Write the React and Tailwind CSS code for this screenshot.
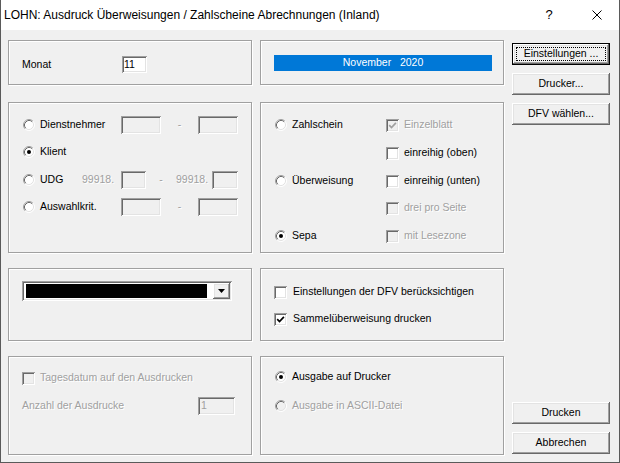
import React from 'react';

const sunken = 'shadow-[inset_1px_1px_0_#a0a0a0,inset_-1px_-1px_0_#fff,inset_2px_2px_0_#696969,inset_-2px_-2px_0_#e3e3e3]';
const raised = 'shadow-[inset_-1px_-1px_0_#696969,inset_1px_1px_0_#fff,inset_-2px_-2px_0_#a0a0a0,inset_2px_2px_0_#e3e3e3]';
const panel = 'border border-[#a0a0a0] shadow-[1px_1px_0_#fff,inset_1px_1px_0_#fff]';
const grayText = 'text-[#a0a0a0] [text-shadow:1px_1px_0_#fff]';

const Radio = ({ checked, disabled }) => (
  <svg width="12" height="12" viewBox="0 0 12 12" className="shrink-0">
    <circle cx="6" cy="6" r="5" fill={disabled ? '#f0f0f0' : '#fff'} />
    <path d="M2.11 9.89A5.5 5.5 0 0 1 9.89 2.11" stroke="#a0a0a0" fill="none" />
    <path d="M9.89 2.11A5.5 5.5 0 0 1 2.11 9.89" stroke="#fff" fill="none" />
    <path d="M2.82 9.18A4.5 4.5 0 0 1 9.18 2.82" stroke="#696969" fill="none" />
    <path d="M9.18 2.82A4.5 4.5 0 0 1 2.82 9.18" stroke="#e3e3e3" fill="none" />
    {checked && <circle cx="6" cy="6" r="2" fill={disabled ? '#a0a0a0' : '#000'} />}
  </svg>
);

const Check = ({ checked, disabled }) => (
  <div className={`w-[13px] h-[13px] shrink-0 flex items-center justify-center ${sunken} ${disabled ? 'bg-[#f0f0f0]' : 'bg-white'}`}>
    {checked && (
      <svg width="13" height="13" viewBox="0 0 13 13">
        <path d="M3.2 6.2l2.3 2.3 4.4-4.6" stroke={disabled ? '#a0a0a0' : '#000'} strokeWidth="1.7" fill="none" />
      </svg>
    )}
  </div>
);

const Field = ({ w, value, white, gray }) => (
  <div className={`h-[18px] ${w} ${sunken} ${white ? 'bg-white' : 'bg-[#f0f0f0]'} flex items-center pl-[3px] ${gray ? 'text-[#a0a0a0]' : ''}`}>
    {value}
  </div>
);

const Button = ({ children, isDefault }) => (
  <div className={`relative h-[22px] flex items-center justify-center bg-[#f0f0f0] ${isDefault ? 'border border-black' : ''} ${raised}`}>
    {isDefault && <div className="absolute inset-[3px] border border-dotted border-black" />}
    <span className="relative">{children}</span>
  </div>
);

const App = () => {
  return (
    <div className="w-[620px] h-[463px] flex flex-col bg-[#f0f0f0] border-x border-b border-[#5a5a5a] font-['Liberation_Sans',Arial,sans-serif] text-[10.5px] text-black overflow-hidden">
      {/* Title bar */}
      <div className="h-[30px] bg-white flex items-center pl-[3px] text-[12px] shrink-0">
        <span>LOHN: Ausdruck Überweisungen / Zahlscheine Abrechnungen (Inland)</span>
        <span className="ml-auto w-[12px] text-center text-[13px]">?</span>
        <svg width="10" height="10" viewBox="0 0 10 10" className="ml-[37px] mr-[17px]">
          <path d="M0.5 0.5l9 9M9.5 0.5l-9 9" stroke="#000" strokeWidth="1" />
        </svg>
      </div>

      <div className="flex pt-[10px] pl-[7px]">
        <div className="grid grid-cols-[244px_244px] grid-rows-[47px_151px_73px_99px] gap-x-[8px] gap-y-[15px]">
          {/* Monat */}
          <div className={`${panel} h-[45px] pt-[15px] pl-[13px]`}>
            <div className="flex items-center h-[17px]">
              <span className="w-[100px]">Monat</span>
              <div className={`h-[17px] w-[25px] ${sunken} bg-white flex items-center pl-[2px]`}>11</div>
            </div>
          </div>
          <div className={`${panel} h-[45px] pt-[14px] pl-[13px]`}>
            <div className="w-[218px] h-[16px] bg-[#0078d7] text-white flex items-center justify-center whitespace-pre">
              November   2020
            </div>
          </div>

          {/* Selection */}
          <div className={`${panel} pt-[13px] pl-[14px]`}>
            <div className="flex items-center h-[18px]">
              <Radio />
              <span className="ml-[5px] w-[81px]">Dienstnehmer</span>
              <Field w="w-[40px]" />
              <span className={`w-[37px] text-center ${grayText}`}>-</span>
              <Field w="w-[40px]" />
            </div>
            <div className="flex items-center h-[18px] mt-[9px]">
              <Radio checked />
              <span className="ml-[5px]">Klient</span>
            </div>
            <div className="flex items-center h-[18px] mt-[10px]">
              <Radio />
              <span className="ml-[5px] w-[42px]">UDG</span>
              <span className={`w-[39px] ${grayText}`}>99918.</span>
              <Field w="w-[25px]" />
              <span className={`w-[30px] text-center ${grayText}`}>-</span>
              <span className={`w-[36px] ${grayText}`}>99918.</span>
              <Field w="w-[26px]" />
            </div>
            <div className="flex items-center h-[18px] mt-[9px]">
              <Radio />
              <span className="ml-[5px] w-[81px]">Auswahlkrit.</span>
              <Field w="w-[40px]" />
              <span className={`w-[37px] text-center ${grayText}`}>-</span>
              <Field w="w-[40px]" />
            </div>
          </div>

          {/* Formular */}
          <div className={`${panel} pt-[13px] pl-[14px]`}>
            {[
              { radio: 'Zahlschein', check: 'Einzelblatt', checked: true, disabled: true },
              { check: 'einreihig (oben)' },
              { radio: 'Überweisung', check: 'einreihig (unten)' },
              { check: 'drei pro Seite', disabled: true },
              { radio: 'Sepa', radioChecked: true, check: 'mit Lesezone', disabled: true },
            ].map((row, idx) => (
              <div key={idx} className={`flex items-center h-[18px] ${idx === 0 ? '' : idx === 3 ? 'mt-[9px]' : 'mt-[10px]'}`}>
                <div className="w-[111px] flex items-center">
                  {row.radio && (
                    <>
                      <Radio checked={row.radioChecked} />
                      <span className="ml-[5px]">{row.radio}</span>
                    </>
                  )}
                </div>
                <Check checked={row.checked} disabled={row.disabled} />
                <span className={`ml-[5px] ${row.disabled ? grayText : ''}`}>{row.check}</span>
              </div>
            ))}
          </div>

          {/* Combobox */}
          <div className={`${panel} pt-[12px] pl-[13px]`}>
            <div className={`w-[210px] h-[20px] p-[2px] flex bg-white ${sunken}`}>
              <div className="ml-[2px] my-[1px] w-[181px] bg-black" />
              <div className={`ml-[6px] w-[17px] flex items-center justify-center bg-[#f0f0f0] ${raised}`}>
                <svg width="7" height="4" viewBox="0 0 7 4">
                  <polygon points="0,0 7,0 3.5,4" fill="#000" />
                </svg>
              </div>
            </div>
          </div>
          <div className={`${panel} pt-[14px] pl-[13px]`}>
            <div className="flex items-center h-[18px]">
              <Check />
              <span className="ml-[6px]">Einstellungen der DFV berücksichtigen</span>
            </div>
            <div className="flex items-center h-[18px] mt-[9px]">
              <Check checked />
              <span className="ml-[6px]">Sammelüberweisung drucken</span>
            </div>
          </div>

          {/* Ausdrucke */}
          <div className={`${panel} pt-[12px] pl-[13px]`}>
            <div className="flex items-center h-[18px]">
              <Check disabled />
              <span className={`ml-[5px] ${grayText}`}>Tagesdatum auf den Ausdrucken</span>
            </div>
            <div className="flex items-center h-[18px] mt-[10px]">
              <span className={`w-[176px] ${grayText}`}>Anzahl der Ausdrucke</span>
              <Field w="w-[37px]" value="1" gray />
            </div>
          </div>
          <div className={`${panel} pt-[11px] pl-[14px]`}>
            <div className="flex items-center h-[18px]">
              <Radio checked />
              <span className="ml-[5px]">Ausgabe auf Drucker</span>
            </div>
            <div className="flex items-center h-[18px] mt-[11px]">
              <Radio disabled />
              <span className={`ml-[5px] ${grayText}`}>Ausgabe in ASCII-Datei</span>
            </div>
          </div>
        </div>

        {/* Buttons */}
        <div className="ml-[8px] w-[98px] flex flex-col pt-[3px] pb-[1px]">
          <div className="flex flex-col gap-[8px]">
            <Button isDefault>Einstellungen ...</Button>
            <Button>Drucker...</Button>
            <Button>DFV wählen...</Button>
          </div>
          <div className="mt-auto flex flex-col gap-[8px]">
            <Button>Drucken</Button>
            <Button>Abbrechen</Button>
          </div>
        </div>
      </div>
    </div>
  );
};

export default App;
